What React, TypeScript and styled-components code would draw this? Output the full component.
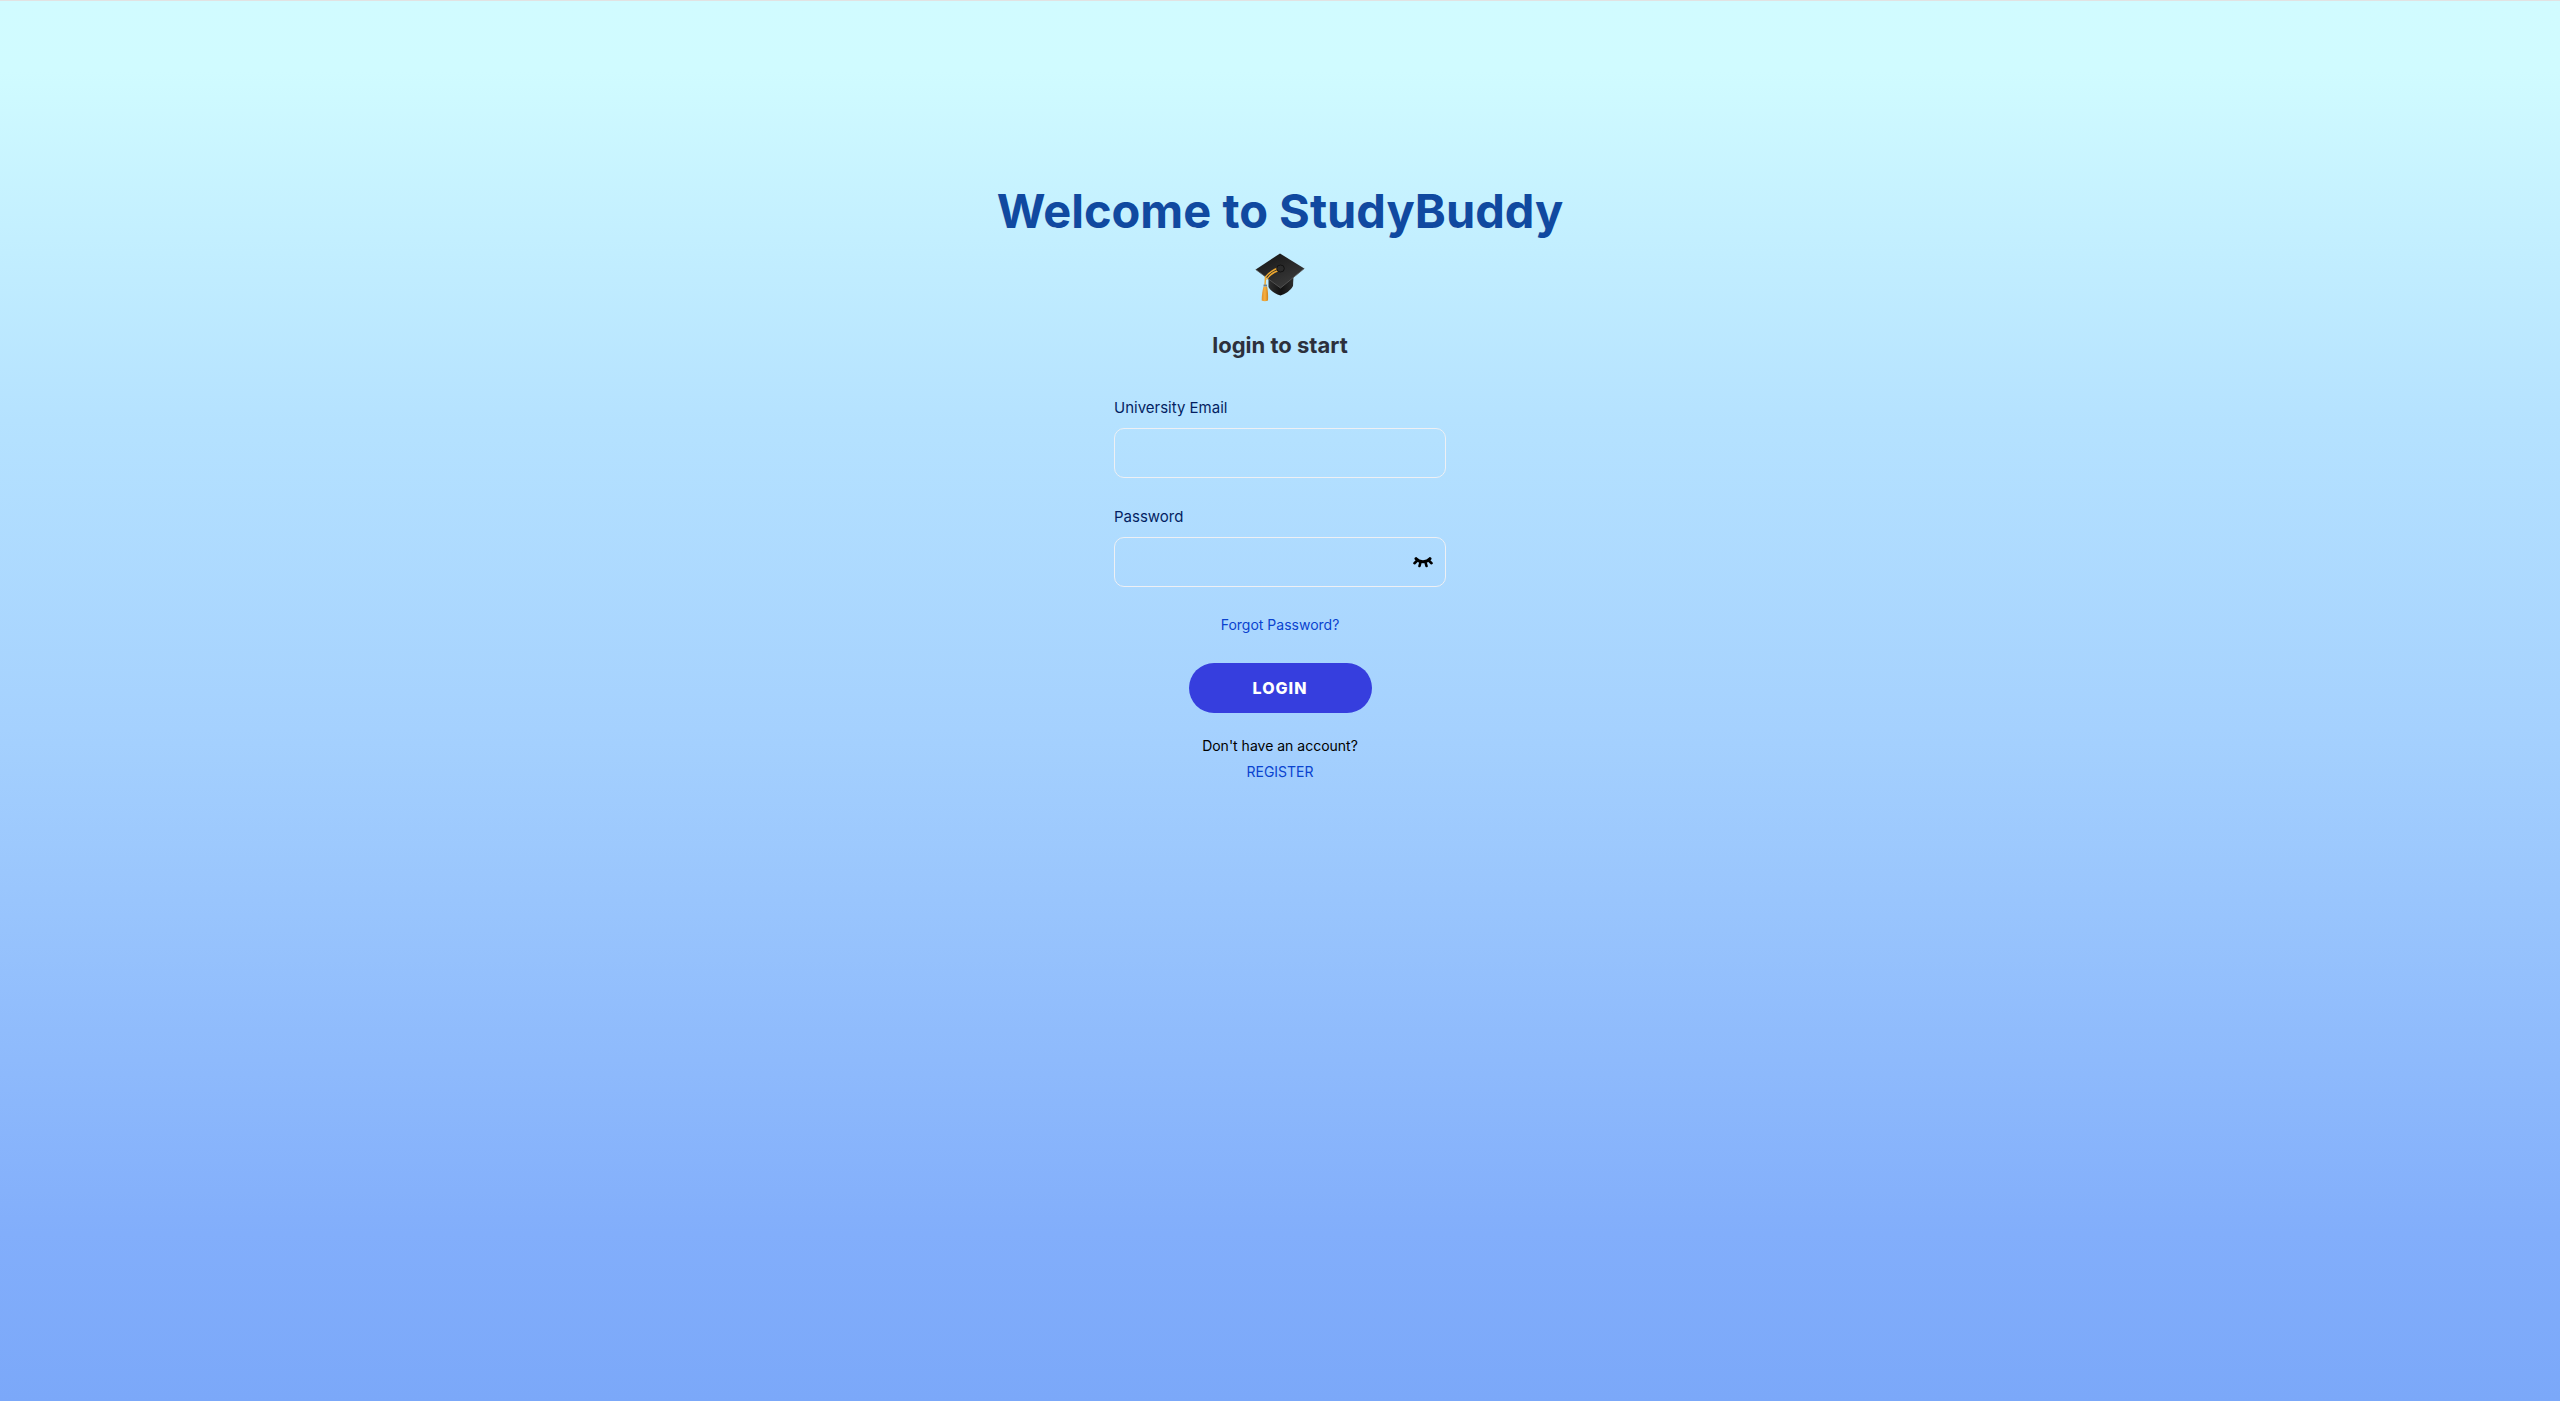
import React, { useState } from "react";
import styled, { createGlobalStyle } from "styled-components";

const GlobalStyle = createGlobalStyle`
  *, *::before, *::after { box-sizing: border-box; }
  body {
    margin: 0;
    font-family: Inter, "Liberation Sans", sans-serif;
    font-size: 16px;
    line-height: 24px;
  }
`;

const Page = styled.main`
  min-height: 100vh;
  padding-top: 176px;
  border-top: 1px solid #e2e2e2;
  display: flex;
  flex-direction: column;
  align-items: center;
  background: linear-gradient(180deg, #d1fbff 0%, #d0fbff 5%, #b5e2ff 30%, #a5d1fe 52%, #82aefb 88%, #7ba8f9 100%);
`;

const Title = styled.h1`
  margin: 0;
  color: #1049a0;
  font-size: 47px;
  line-height: 68px;
  font-weight: 700;
  text-align: center;
`;

const CapIcon = styled.svg`
  display: block;
  width: 52px;
  height: 52px;
  margin-top: 6px;
`;

const Subtitle = styled.h2`
  margin: 26px 0 0;
  color: #2d303c;
  font-size: 22px;
  line-height: 32px;
  font-weight: 700;
`;

const Form = styled.form`
  width: 332px;
  max-width: 100%;
  margin-top: 35px;
  display: flex;
  flex-direction: column;
  align-items: center;
`;

const Field = styled.div`
  width: 100%;
  display: flex;
  flex-direction: column;
  gap: 8px;
  margin-bottom: 27px;
`;

const Label = styled.label`
  color: #041f62;
  font-size: 15px;
  line-height: 24px;
`;

const InputWrap = styled.div`
  position: relative;
`;

const Input = styled.input`
  display: block;
  width: 100%;
  height: 50px;
  padding: 0 16px;
  border: 1px solid #eef0f4;
  border-radius: 10px;
  background: transparent;
  color: #041f62;
  font: inherit;
`;

const Reveal = styled.button`
  position: absolute;
  top: 0;
  right: 7px;
  width: 32px;
  height: 50px;
  padding: 0;
  border: 0;
  background: none;
  display: flex;
  align-items: center;
  justify-content: center;
  cursor: pointer;
`;

const TextLink = styled.a`
  color: #0a43cf;
  font-size: 14px;
  line-height: 22px;
  text-decoration: none;
`;

const Submit = styled.button`
  width: 183px;
  height: 50px;
  margin: 27px 0 22px;
  border: 0;
  border-radius: 25px;
  background: #363ede;
  color: #fff;
  font-family: inherit;
  font-size: 16px;
  font-weight: 800;
  letter-spacing: 1px;
  cursor: pointer;
`;

const Note = styled.p`
  margin: 0 0 4px;
  color: #000;
  font-size: 14px;
  line-height: 22px;
`;

function GraduationCap() {
  return (
    <CapIcon viewBox="0 0 52 52" role="img" aria-label="Graduation cap">
      <defs>
        <linearGradient id="board" x1="0" y1="0" x2="0.6" y2="1">
          <stop offset="0" stopColor="#141414" />
          <stop offset="1" stopColor="#3a3a3a" />
        </linearGradient>
        <linearGradient id="crown" x1="0" y1="0" x2="1" y2="0">
          <stop offset="0" stopColor="#303030" />
          <stop offset="0.5" stopColor="#111" />
          <stop offset="1" stopColor="#2c2c2c" />
        </linearGradient>
        <linearGradient id="tassel" x1="0" y1="0" x2="1" y2="0">
          <stop offset="0" stopColor="#e0902a" />
          <stop offset="0.5" stopColor="#f6b040" />
          <stop offset="1" stopColor="#cf8118" />
        </linearGradient>
      </defs>
      <path d="M14.500 26v10c2 4 7 7 12 8.500 5-1.500 10-5 12.500-9.500l.5-10z" fill="url(#crown)" />
      <path d="M26 2.500 50.300 17.500 26.500 37 1.700 18.500z" fill="url(#board)" />
      <path d="M1.700 18.500 26.500 37 50.300 17.500" fill="none" stroke="#5a5a5a" strokeWidth="0.800" />
      <path d="M25 16.500C19 19 14 22 11.500 26L11 34M25.500 19C20 21 15 24.500 13 28" fill="none" stroke="#eda72f" strokeWidth="1.500" strokeLinecap="round" />
      <ellipse cx="26.500" cy="17.500" rx="3.800" ry="3.500" fill="#2b2b2b" stroke="#0c0c0c" strokeWidth="0.800" />
      <path d="M9.500 35.500h3.500c1 4 1.300 9 1 14q-3.200 1.500-6.300 0c0-5 .7-10 1.800-14z" fill="url(#tassel)" />
      <path d="M9.500 34.500h3.500" stroke="#71818a" strokeWidth="1.800" />
    </CapIcon>
  );
}

function ClosedEye() {
  return (
    <svg width="20" height="11" viewBox="0 0 20 11" fill="none" stroke="#000" strokeLinecap="round" aria-hidden="true">
      <path d="M3 1.700C6 5.700 14 5.700 17 1.700" strokeWidth="3" />
      <path d="M4 3.800 1.500 6.200M7.600 5 6.500 9M12.400 5 13.500 9M16 3.800 18.500 6.200" strokeWidth="2.600" />
    </svg>
  );
}

export default function App() {
  const [visible, setVisible] = useState(false);
  return (
    <>
      <GlobalStyle />
      <Page>
        <Title>Welcome to StudyBuddy</Title>
        <GraduationCap />
        <Subtitle>login to start</Subtitle>
        <Form onSubmit={(e) => e.preventDefault()}>
          <Field>
            <Label htmlFor="email">University Email</Label>
            <Input id="email" type="email" />
          </Field>
          <Field>
            <Label htmlFor="password">Password</Label>
            <InputWrap>
              <Input id="password" type={visible ? "text" : "password"} />
              <Reveal type="button" aria-label="Toggle password visibility" onClick={() => setVisible(!visible)}>
                <ClosedEye />
              </Reveal>
            </InputWrap>
          </Field>
          <TextLink href="#forgot">Forgot Password?</TextLink>
          <Submit type="submit">LOGIN</Submit>
          <Note>Don't have an account?</Note>
          <TextLink href="#register">REGISTER</TextLink>
        </Form>
      </Page>
    </>
  );
}
